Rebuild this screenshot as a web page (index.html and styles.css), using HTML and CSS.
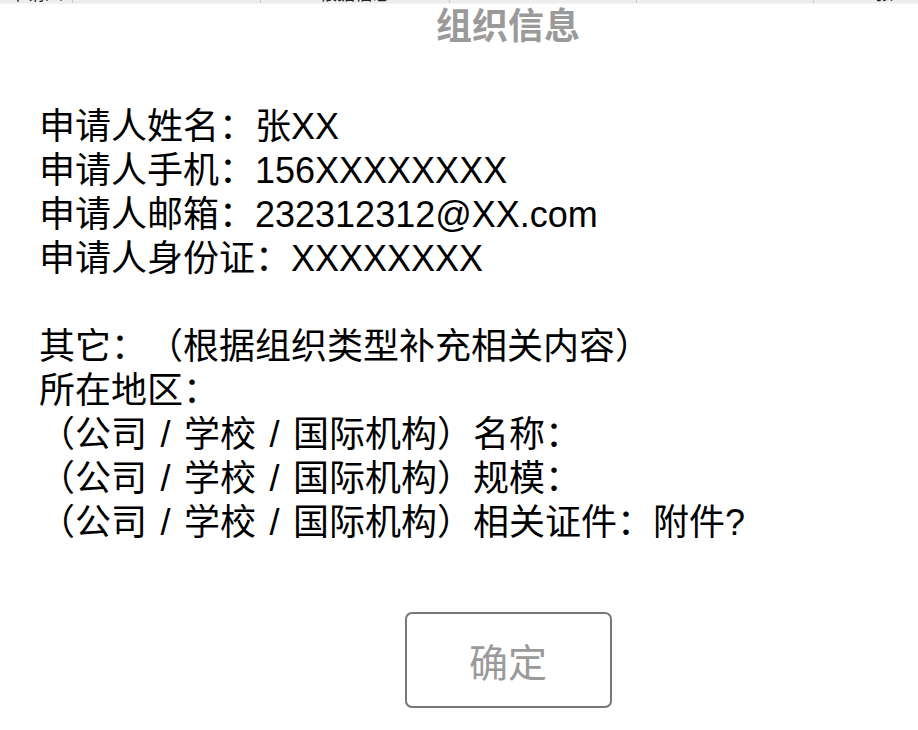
FILE: index.html
```
<!DOCTYPE html>
<html lang="zh-CN">
<head>
<meta charset="utf-8">
<title>组织信息</title>
<link rel="stylesheet" href="styles.css">
</head>
<body>
<div class="strip">
  <div class="cell c1">申请人</div>
  <div class="cell c2">00183</div>
  <div class="cell c3">根据信息</div>
  <div class="cell c4">2017/10/30</div>
  <div class="cell c5">2017/10/26</div>
  <div class="cell c6">张XX申请</div>
</div>
<div class="dialog">
  <h1 class="title">组织信息</h1>
  <div class="content">
    <p class="line">申请人姓名：张XX</p>
    <p class="line">申请人手机：156XXXXXXXX</p>
    <p class="line">申请人邮箱：232312312@XX.com</p>
    <p class="line">申请人身份证：XXXXXXXX</p>
    <p class="line blank">&nbsp;</p>
    <p class="line">其它：（根据组织类型补充相关内容）</p>
    <p class="line">所在地区：</p>
    <p class="line">（公司 / 学校 / 国际机构）名称：</p>
    <p class="line">（公司 / 学校 / 国际机构）规模：</p>
    <p class="line">（公司 / 学校 / 国际机构）相关证件：附件?</p>
  </div>
  <div class="actions">
    <button class="ok">确定</button>
  </div>
</div>
</body>
</html>
```
FILE: styles.css
```
html, body {
  margin: 0;
  padding: 0;
  background: #fff;
  overflow: hidden;
}
body {
  width: 1016px;
  font-family: "Liberation Sans", "Noto Sans CJK SC", sans-serif;
  color: #000;
  text-spacing-trim: space-all;
}
.strip {
  height: 3px;
  background: #eeeeee;
  display: flex;
  overflow: hidden;
  border-bottom: 1px solid #f4f4f4;
}
.cell {
  font-size: 18px;
  line-height: 18px;
  margin-top: -15px;
  color: #222;
  text-align: center;
  border-right: 1px solid #c8c8c8;
  white-space: nowrap;
  overflow: hidden;
}
.c1 { width: 72px; }
.c2 { width: 187px; }
.c3 { width: 188px; }
.c4 { width: 186px; }
.c5 { width: 176px; }
.c6 { width: 200px; border-right: none; }
.dialog {
  display: flex;
  flex-direction: column;
}
.title {
  margin: 0;
  padding-top: 3px;
  font-size: 36px;
  line-height: 40px;
  font-weight: bold;
  color: #9a9a9a;
  text-align: center;
}
.content {
  margin-top: 58px;
  padding-left: 39px;
  font-size: 36px;
}
.line {
  margin: 0;
  line-height: 44px;
  white-space: pre;
  word-spacing: 3.5px;
  text-spacing-trim: space-all;
}
.actions {
  margin-top: 67px;
  display: flex;
  justify-content: center;
}
.ok {
  width: 207px;
  height: 96px;
  border: 2px solid #777;
  border-radius: 7px;
  background: #fff;
  color: #9a9a9a;
  font-family: "Noto Sans CJK SC", sans-serif;
  font-size: 39px;
  padding: 0;
}
```
